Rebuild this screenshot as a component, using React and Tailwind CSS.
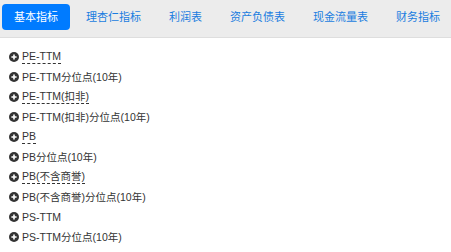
const tabs = ["基本指标", "理杏仁指标", "利润表", "资产负债表", "现金流量表", "财务指标"];

const items = [
  { label: "PE-TTM", dashed: true },
  { label: "PE-TTM分位点(10年)" },
  { label: "PE-TTM(扣非)", dashed: true },
  { label: "PE-TTM(扣非)分位点(10年)" },
  { label: "PB", dashed: true },
  { label: "PB分位点(10年)" },
  { label: "PB(不含商誉)", dashed: true },
  { label: "PB(不含商誉)分位点(10年)" },
  { label: "PS-TTM" },
  { label: "PS-TTM分位点(10年)" },
  { label: "PS-TTM(扣非)" },
];

const PlusCircle = () => (
  <svg width="10" height="10" viewBox="0 0 10 10" className="shrink-0">
    <circle cx="5" cy="5" r="5" fill="#333" />
    <path d="M5 2.4v5.2M2.4 5h5.2" stroke="#fff" strokeWidth="1.6" />
  </svg>
);

export default function App() {
  return (
    <div
      className="w-[451px] h-[252px] overflow-hidden bg-white text-[#333]"
      style={{ fontFamily: '"Liberation Sans", "Noto Sans CJK SC", sans-serif' }}
    >
      {/* Tabs */}
      <div className="flex gap-1 h-[38px] pt-1 px-[2px] bg-[#ececec] border-b border-[#dedede] overflow-hidden">
        {tabs.map((t, i) => (
          <div
            key={t}
            className={
              i === 0
                ? "shrink-0 whitespace-nowrap h-[26px] px-3 flex items-center rounded bg-[#007bff] text-white text-[11px]"
                : "shrink-0 whitespace-nowrap h-[26px] px-3 flex items-center text-[#1a7de0] text-[11px]"
            }
          >
            {t}
          </div>
        ))}
      </div>

      {/* Indicator list */}
      <ul className="pt-[9px] pl-[9px]">
        {items.map((it) => (
          <li key={it.label} className="flex items-center gap-[3px] h-5 text-[10.5px]">
            <PlusCircle />
            <span
              className={
                it.dashed ? "border-b border-dashed border-[#333] leading-[13px]" : "leading-[13px]"
              }
            >
              {it.label}
            </span>
          </li>
        ))}
      </ul>
    </div>
  );
}
